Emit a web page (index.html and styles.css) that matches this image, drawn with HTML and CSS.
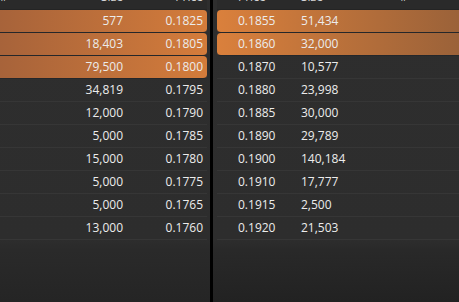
FILE: index.html
```html
<!DOCTYPE html>
<html>
<head>
<meta charset="utf-8">
<link rel="stylesheet" href="styles.css">
</head>
<body>
<div class="book">
  <div class="side bid">
    <div class="head"><span class="c-n">#</span><span class="c-size">Size</span><span class="c-price">Price</span></div>
    <div class="row hl"><span class="c-n"></span><span class="c-size">577</span><span class="c-price">0.1825</span></div>
    <div class="row hl"><span class="c-n"></span><span class="c-size">18,403</span><span class="c-price">0.1805</span></div>
    <div class="row hl"><span class="c-n"></span><span class="c-size">79,500</span><span class="c-price">0.1800</span></div>
    <div class="row"><span class="c-n"></span><span class="c-size">34,819</span><span class="c-price">0.1795</span></div>
    <div class="row"><span class="c-n"></span><span class="c-size">12,000</span><span class="c-price">0.1790</span></div>
    <div class="row"><span class="c-n"></span><span class="c-size">5,000</span><span class="c-price">0.1785</span></div>
    <div class="row"><span class="c-n"></span><span class="c-size">15,000</span><span class="c-price">0.1780</span></div>
    <div class="row"><span class="c-n"></span><span class="c-size">5,000</span><span class="c-price">0.1775</span></div>
    <div class="row"><span class="c-n"></span><span class="c-size">5,000</span><span class="c-price">0.1765</span></div>
    <div class="row"><span class="c-n"></span><span class="c-size">13,000</span><span class="c-price">0.1760</span></div>
  </div>
  <div class="divider"></div>
  <div class="side ask">
    <div class="head"><span class="c-price">Price</span><span class="c-size">Size</span><span class="c-n">#</span></div>
    <div class="row hl"><span class="c-price">0.1855</span><span class="c-size">51,434</span><span class="c-n"></span></div>
    <div class="row hl"><span class="c-price">0.1860</span><span class="c-size">32,000</span><span class="c-n"></span></div>
    <div class="row"><span class="c-price">0.1870</span><span class="c-size">10,577</span><span class="c-n"></span></div>
    <div class="row"><span class="c-price">0.1880</span><span class="c-size">23,998</span><span class="c-n"></span></div>
    <div class="row"><span class="c-price">0.1885</span><span class="c-size">30,000</span><span class="c-n"></span></div>
    <div class="row"><span class="c-price">0.1890</span><span class="c-size">29,789</span><span class="c-n"></span></div>
    <div class="row"><span class="c-price">0.1900</span><span class="c-size">140,184</span><span class="c-n"></span></div>
    <div class="row"><span class="c-price">0.1910</span><span class="c-size">17,777</span><span class="c-n"></span></div>
    <div class="row"><span class="c-price">0.1915</span><span class="c-size">2,500</span><span class="c-n"></span></div>
    <div class="row"><span class="c-price">0.1920</span><span class="c-size">21,503</span><span class="c-n"></span></div>
  </div>
</div>
</body>
</html>
```
FILE: styles.css
```css
html, body {
  margin: 0;
  padding: 0;
  width: 459px;
  height: 302px;
  overflow: hidden;
  background: #262626;
  font-family: "Open Sans", "Noto Sans", sans-serif;
  font-size: 12px;
  color: #ececec;
}

.book {
  display: flex;
  height: 302px;
}

.side {
  display: flex;
  flex-direction: column;
  background: linear-gradient(to bottom, #2e2e2e 0, #2d2d2d 240px, #2a2a2a 250px, #252525 302px);
}

.bid {
  width: 210px;
}

.ask {
  flex: 1;
  background: linear-gradient(to bottom, #2e2e2e 0, #2d2d2d 240px, #292929 250px, #222222 302px);
}

.divider {
  width: 3px;
  background: #000;
}

.head {
  display: grid;
  height: 20px;
  line-height: 16px;
  margin-top: -11px;
  border-bottom: 1px solid #242424;
  background: #2a2a2a;
  color: #d4d4d4;
}

.row {
  display: grid;
  height: 22px;
  line-height: 22px;
  border-bottom: 1px solid #363636;
}

.bid .head,
.bid .row {
  grid-template-columns: 1fr 60px 80px;
  margin-right: 3px;
  padding-right: 4px;
  text-align: right;
}

.bid .head .c-n {
  text-align: left;
}

.ask .head,
.ask .row {
  grid-template-columns: 63px 99px 1fr;
  margin-left: 4px;
  padding-left: 21px;
  text-align: left;
}

.bid .row.hl {
  background: linear-gradient(to right, #a7633a, #d47c3b);
  border-bottom-color: #25272a;
  border-radius: 0 4px 4px 0;
}

.ask .row.hl {
  background: linear-gradient(to right, #da803c, #9b6239);
  border-bottom-color: #25272a;
  border-radius: 4px 0 0 4px;
}
```
